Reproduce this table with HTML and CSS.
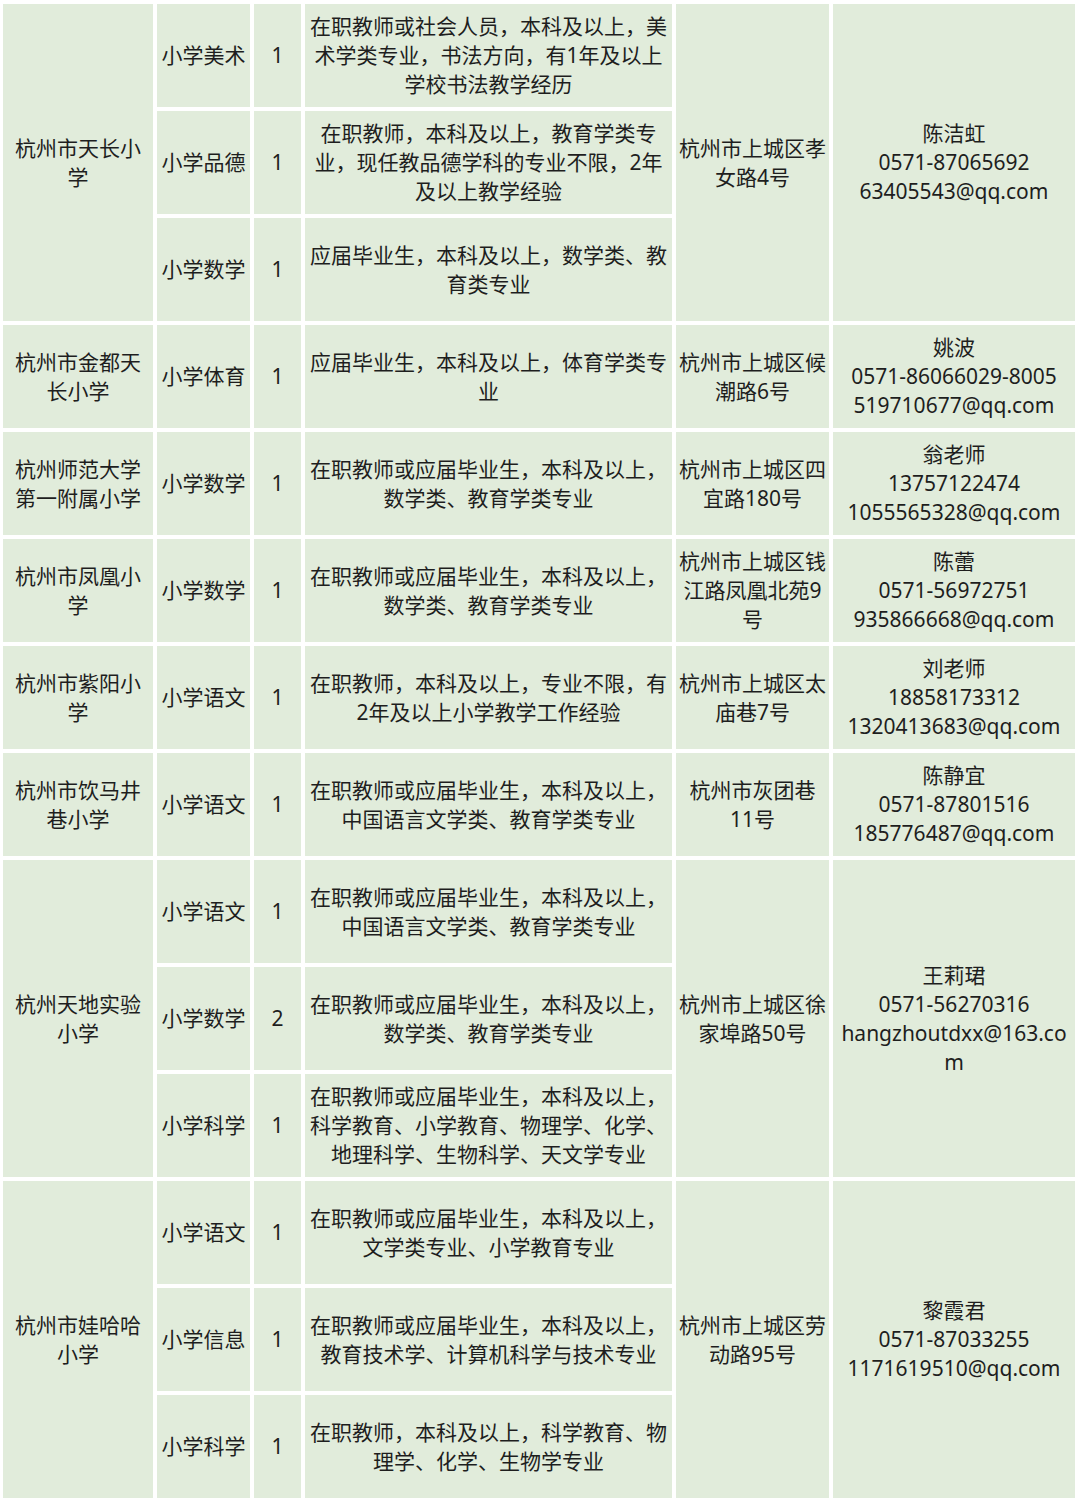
FILE: index.html
```html
<!DOCTYPE html>
<html lang="zh-CN">
<head>
<meta charset="utf-8">
<link rel="stylesheet" href="styles.css">
</head>
<body>
<table class="jobs">
  <colgroup>
    <col class="c-school"><col class="c-subject"><col class="c-num"><col class="c-req"><col class="c-addr"><col class="c-contact">
  </colgroup>
  <tbody>
    <tr>
      <td rowspan="3">杭州市天长小学</td>
      <td>小学美术</td><td>1</td>
      <td>在职教师或社会人员，本科及以上，美术学类专业，书法方向，有1年及以上学校书法教学经历</td>
      <td rowspan="3">杭州市上城区孝女路4号</td>
      <td rowspan="3" class="contact">陈洁虹<br>0571-87065692<br>63405543@qq.com</td>
    </tr>
    <tr>
      <td>小学品德</td><td>1</td>
      <td>在职教师，本科及以上，教育学类专业，现任教品德学科的专业不限，2年及以上教学经验</td>
    </tr>
    <tr>
      <td>小学数学</td><td>1</td>
      <td>应届毕业生，本科及以上，数学类、教育类专业</td>
    </tr>
    <tr>
      <td>杭州市金都天长小学</td>
      <td>小学体育</td><td>1</td>
      <td>应届毕业生，本科及以上，体育学类专业</td>
      <td>杭州市上城区候潮路6号</td>
      <td class="contact">姚波<br>0571-86066029-8005<br>519710677@qq.com</td>
    </tr>
    <tr>
      <td>杭州师范大学第一附属小学</td>
      <td>小学数学</td><td>1</td>
      <td>在职教师或应届毕业生，本科及以上，数学类、教育学类专业</td>
      <td>杭州市上城区四宜路180号</td>
      <td class="contact">翁老师<br>13757122474<br>1055565328@qq.com</td>
    </tr>
    <tr>
      <td>杭州市凤凰小学</td>
      <td>小学数学</td><td>1</td>
      <td>在职教师或应届毕业生，本科及以上，数学类、教育学类专业</td>
      <td>杭州市上城区钱江路凤凰北苑9号</td>
      <td class="contact">陈蕾<br>0571-56972751<br>935866668@qq.com</td>
    </tr>
    <tr>
      <td>杭州市紫阳小学</td>
      <td>小学语文</td><td>1</td>
      <td>在职教师，本科及以上，专业不限，有2年及以上小学教学工作经验</td>
      <td>杭州市上城区太庙巷7号</td>
      <td class="contact">刘老师<br>18858173312<br>1320413683@qq.com</td>
    </tr>
    <tr>
      <td>杭州市饮马井巷小学</td>
      <td>小学语文</td><td>1</td>
      <td>在职教师或应届毕业生，本科及以上，中国语言文学类、教育学类专业</td>
      <td>杭州市灰团巷<br>11号</td>
      <td class="contact">陈静宜<br>0571-87801516<br>185776487@qq.com</td>
    </tr>
    <tr>
      <td rowspan="3">杭州天地实验小学</td>
      <td>小学语文</td><td>1</td>
      <td>在职教师或应届毕业生，本科及以上，中国语言文学类、教育学类专业</td>
      <td rowspan="3">杭州市上城区徐家埠路50号</td>
      <td rowspan="3" class="contact">王莉珺<br>0571-56270316<br>hangzhoutdxx@163.co<br>m</td>
    </tr>
    <tr>
      <td>小学数学</td><td>2</td>
      <td>在职教师或应届毕业生，本科及以上，数学类、教育学类专业</td>
    </tr>
    <tr>
      <td>小学科学</td><td>1</td>
      <td>在职教师或应届毕业生，本科及以上，科学教育、小学教育、物理学、化学、地理科学、生物科学、天文学专业</td>
    </tr>
    <tr>
      <td rowspan="3">杭州市娃哈哈小学</td>
      <td>小学语文</td><td>1</td>
      <td>在职教师或应届毕业生，本科及以上，文学类专业、小学教育专业</td>
      <td rowspan="3">杭州市上城区劳动路95号</td>
      <td rowspan="3" class="contact">黎霞君<br>0571-87033255<br>1171619510@qq.com</td>
    </tr>
    <tr>
      <td>小学信息</td><td>1</td>
      <td>在职教师或应届毕业生，本科及以上，教育技术学、计算机科学与技术专业</td>
    </tr>
    <tr>
      <td>小学科学</td><td>1</td>
      <td>在职教师，本科及以上，科学教育、物理学、化学、生物学专业</td>
    </tr>
  </tbody>
</table>
</body>
</html>
```

FILE: styles.css
```css
html, body {
  margin: 0;
  padding: 0;
  background: #ffffff;
}

.jobs {
  border-collapse: separate;
  border-spacing: 4px;
  table-layout: fixed;
  width: 1080px;
  margin-left: -1px;
  font-family: "Noto Sans", "Noto Sans CJK SC", sans-serif;
  font-size: 21px;
  line-height: 29px;
  color: #1e1e1e;
}

.c-school { width: 150px; }
.c-subject { width: 93px; }
.c-num { width: 47px; }
.c-req { width: 367px; }
.c-addr { width: 153px; }
.c-contact { width: 242px; }

.jobs tr {
  height: 103px;
}

.jobs td {
  background: #e1ecdb;
  padding: 0 3px;
  text-align: center;
  vertical-align: middle;
  word-break: normal;
}

.jobs td.contact {
  word-break: break-all;
}
```
